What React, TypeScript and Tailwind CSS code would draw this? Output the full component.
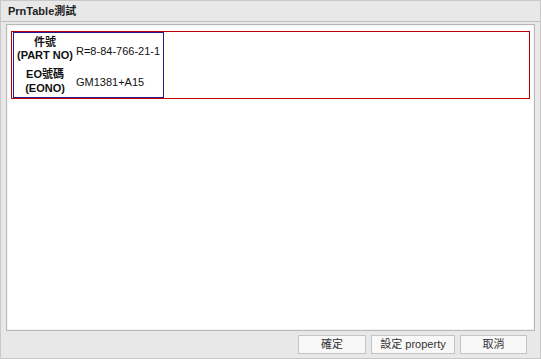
import React from "react";

export default function App() {
  const font = { fontFamily: '"Liberation Sans", "Noto Sans CJK TC", sans-serif' };
  return (
    <div className="w-[541px] h-[359px] bg-[#f0f0f0] flex flex-col" style={font}>
      <div className="flex-1 flex flex-col border border-[#c8c8c8] m-0 bg-[#e8e8e8]">
        <div className="h-[21px] flex items-center pl-[7px] text-[11px] font-bold text-[#222] border-b border-[#c0c0c0]">
          PrnTable測試
        </div>
        <div className="flex-1 flex flex-col px-[5px] pt-[2px]">
          <div className="flex-1 flex flex-col border border-[#b8b8b8] bg-[#f4f4f4] p-px">
            <div className="flex-1 bg-white p-[3px] pt-[5px]">
              <div className="border border-[#c00000] h-[68px] flex items-start pl-px pt-0">
                <div className="border border-[#2a1a8a] h-[66px] w-[151px] text-[#111]">
                  <div className="flex items-center h-[32px]">
                    <div className="w-[62px] text-center font-bold text-[11px] leading-[13px]">
                      <div>件號</div>
                      <div>(PART NO)</div>
                    </div>
                    <div className="whitespace-nowrap text-[11px] pt-[4px]">R=8-84-766-21-1</div>
                  </div>
                  <div className="flex items-center h-[32px]">
                    <div className="w-[62px] text-center font-bold text-[11px] leading-[14px]">
                      <div>EO號碼</div>
                      <div>(EONO)</div>
                    </div>
                    <div className="whitespace-nowrap text-[11px] pt-[2px]">GM1381+A15</div>
                  </div>
                </div>
              </div>
            </div>
          </div>
          <div className="h-[27px] flex items-center justify-end gap-[5px] pr-[8px]">
            <button className="w-[68px] h-[19px] border border-[#c4c4c4] bg-[#f8f8f8] text-[11px] text-[#333]">確定</button>
            <button className="w-[84px] h-[19px] border border-[#c4c4c4] bg-[#f8f8f8] text-[11px] text-[#333]">設定 property</button>
            <button className="w-[67px] h-[19px] border border-[#c4c4c4] bg-[#f8f8f8] text-[11px] text-[#333]">取消</button>
          </div>
        </div>
      </div>
    </div>
  );
}
